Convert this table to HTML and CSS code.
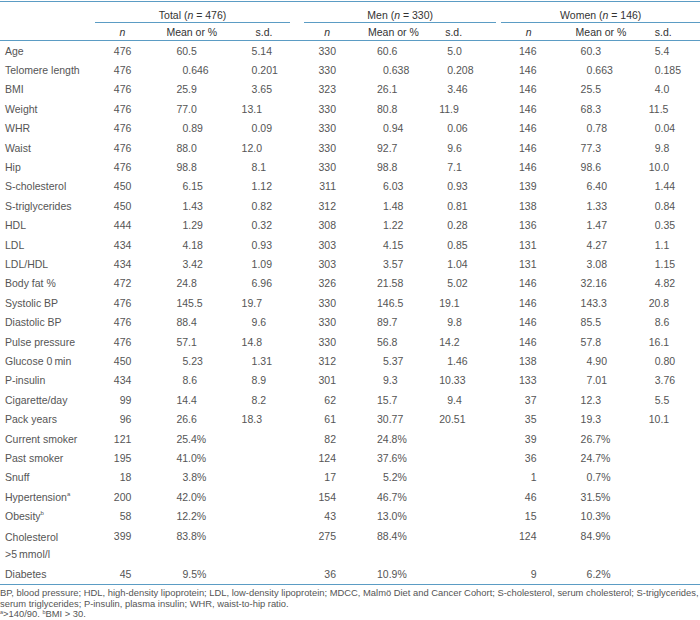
FILE: index.html
```html
<!DOCTYPE html>
<html>
<head>
<meta charset="utf-8">
<link rel="stylesheet" href="styles.css">
</head>
<body>
<div class="page">
<table class="tbl">
<colgroup>
<col class="c-lab"><col class="c-n"><col class="c-m"><col class="c-s">
<col class="c-n"><col class="c-m"><col class="c-s">
<col class="c-n"><col class="c-m"><col class="c-s">
</colgroup>
<thead>
<tr class="grp">
<th></th>
<th colspan="3"><div class="gl gl-t">Total (<i>n</i> = 476)</div></th>
<th colspan="3"><div class="gl gl-m">Men (<i>n</i> = 330)</div></th>
<th colspan="3"><div class="gl gl-w">Women (<i>n</i> = 146)</div></th>
</tr>
<tr class="sub">
<th></th>
<th class="hn t"><i>n</i></th><th class="hm t">Mean or %</th><th class="hs t">s.d.</th>
<th class="hn m"><i>n</i></th><th class="hm m">Mean or %</th><th class="hs m">s.d.</th>
<th class="hn w"><i>n</i></th><th class="hm w">Mean or %</th><th class="hs w">s.d.</th>
</tr>
</thead>
<tbody>
<tr><td>Age</td><td class="n t">476</td><td class="v t">60.5</td><td class="s t p1">5.14</td><td class="n m">330</td><td class="v m">60.6</td><td class="s m p1">5.0</td><td class="n w">146</td><td class="v w">60.3</td><td class="s w p1">5.4</td></tr>
<tr><td>Telomere length</td><td class="n t">476</td><td class="v t p1">0.646</td><td class="s t p1">0.201</td><td class="n m">330</td><td class="v m p1">0.638</td><td class="s m p1">0.208</td><td class="n w">146</td><td class="v w p1">0.663</td><td class="s w p1">0.185</td></tr>
<tr><td>BMI</td><td class="n t">476</td><td class="v t">25.9</td><td class="s t p1">3.65</td><td class="n m">323</td><td class="v m">26.1</td><td class="s m p1">3.46</td><td class="n w">146</td><td class="v w">25.5</td><td class="s w p1">4.0</td></tr>
<tr><td>Weight</td><td class="n t">476</td><td class="v t">77.0</td><td class="s t">13.1</td><td class="n m">330</td><td class="v m">80.8</td><td class="s m">11.9</td><td class="n w">146</td><td class="v w">68.3</td><td class="s w">11.5</td></tr>
<tr><td>WHR</td><td class="n t">476</td><td class="v t p1">0.89</td><td class="s t p1">0.09</td><td class="n m">330</td><td class="v m p1">0.94</td><td class="s m p1">0.06</td><td class="n w">146</td><td class="v w p1">0.78</td><td class="s w p1">0.04</td></tr>
<tr><td>Waist</td><td class="n t">476</td><td class="v t">88.0</td><td class="s t">12.0</td><td class="n m">330</td><td class="v m">92.7</td><td class="s m p1">9.6</td><td class="n w">146</td><td class="v w">77.3</td><td class="s w p1">9.8</td></tr>
<tr><td>Hip</td><td class="n t">476</td><td class="v t">98.8</td><td class="s t p1">8.1</td><td class="n m">330</td><td class="v m">98.8</td><td class="s m p1">7.1</td><td class="n w">146</td><td class="v w">98.6</td><td class="s w">10.0</td></tr>
<tr><td>S-cholesterol</td><td class="n t">450</td><td class="v t p1">6.15</td><td class="s t p1">1.12</td><td class="n m">311</td><td class="v m p1">6.03</td><td class="s m p1">0.93</td><td class="n w">139</td><td class="v w p1">6.40</td><td class="s w p1">1.44</td></tr>
<tr><td>S-triglycerides</td><td class="n t">450</td><td class="v t p1">1.43</td><td class="s t p1">0.82</td><td class="n m">312</td><td class="v m p1">1.48</td><td class="s m p1">0.81</td><td class="n w">138</td><td class="v w p1">1.33</td><td class="s w p1">0.84</td></tr>
<tr><td>HDL</td><td class="n t">444</td><td class="v t p1">1.29</td><td class="s t p1">0.32</td><td class="n m">308</td><td class="v m p1">1.22</td><td class="s m p1">0.28</td><td class="n w">136</td><td class="v w p1">1.47</td><td class="s w p1">0.35</td></tr>
<tr><td>LDL</td><td class="n t">434</td><td class="v t p1">4.18</td><td class="s t p1">0.93</td><td class="n m">303</td><td class="v m p1">4.15</td><td class="s m p1">0.85</td><td class="n w">131</td><td class="v w p1">4.27</td><td class="s w p1">1.1</td></tr>
<tr><td>LDL/HDL</td><td class="n t">434</td><td class="v t p1">3.42</td><td class="s t p1">1.09</td><td class="n m">303</td><td class="v m p1">3.57</td><td class="s m p1">1.04</td><td class="n w">131</td><td class="v w p1">3.08</td><td class="s w p1">1.15</td></tr>
<tr><td>Body fat %</td><td class="n t">472</td><td class="v t">24.8</td><td class="s t p1">6.96</td><td class="n m">326</td><td class="v m">21.58</td><td class="s m p1">5.02</td><td class="n w">146</td><td class="v w">32.16</td><td class="s w p1">4.82</td></tr>
<tr><td>Systolic BP</td><td class="n t">476</td><td class="v t">145.5</td><td class="s t">19.7</td><td class="n m">330</td><td class="v m">146.5</td><td class="s m">19.1</td><td class="n w">146</td><td class="v w">143.3</td><td class="s w">20.8</td></tr>
<tr><td>Diastolic BP</td><td class="n t">476</td><td class="v t">88.4</td><td class="s t p1">9.6</td><td class="n m">330</td><td class="v m">89.7</td><td class="s m p1">9.8</td><td class="n w">146</td><td class="v w">85.5</td><td class="s w p1">8.6</td></tr>
<tr><td>Pulse pressure</td><td class="n t">476</td><td class="v t">57.1</td><td class="s t">14.8</td><td class="n m">330</td><td class="v m">56.8</td><td class="s m">14.2</td><td class="n w">146</td><td class="v w">57.8</td><td class="s w">16.1</td></tr>
<tr><td>Glucose 0&#8201;min</td><td class="n t">450</td><td class="v t p1">5.23</td><td class="s t p1">1.31</td><td class="n m">312</td><td class="v m p1">5.37</td><td class="s m p1">1.46</td><td class="n w">138</td><td class="v w p1">4.90</td><td class="s w p1">0.80</td></tr>
<tr><td>P-insulin</td><td class="n t">434</td><td class="v t p1">8.6</td><td class="s t p1">8.9</td><td class="n m">301</td><td class="v m p1">9.3</td><td class="s m">10.33</td><td class="n w">133</td><td class="v w p1">7.01</td><td class="s w p1">3.76</td></tr>
<tr><td>Cigarette/day</td><td class="n t">99</td><td class="v t">14.4</td><td class="s t p1">8.2</td><td class="n m">62</td><td class="v m">15.7</td><td class="s m p1">9.4</td><td class="n w">37</td><td class="v w">12.3</td><td class="s w p1">5.5</td></tr>
<tr><td>Pack years</td><td class="n t">96</td><td class="v t">26.6</td><td class="s t">18.3</td><td class="n m">61</td><td class="v m">30.77</td><td class="s m">20.51</td><td class="n w">35</td><td class="v w">19.3</td><td class="s w">10.1</td></tr>
<tr><td>Current smoker</td><td class="n t">121</td><td class="v t">25.4%</td><td class="s t"></td><td class="n m">82</td><td class="v m">24.8%</td><td class="s m"></td><td class="n w">39</td><td class="v w">26.7%</td><td class="s w"></td></tr>
<tr><td>Past smoker</td><td class="n t">195</td><td class="v t">41.0%</td><td class="s t"></td><td class="n m">124</td><td class="v m">37.6%</td><td class="s m"></td><td class="n w">36</td><td class="v w">24.7%</td><td class="s w"></td></tr>
<tr><td>Snuff</td><td class="n t">18</td><td class="v t p1">3.8%</td><td class="s t"></td><td class="n m">17</td><td class="v m p1">5.2%</td><td class="s m"></td><td class="n w">1</td><td class="v w p1">0.7%</td><td class="s w"></td></tr>
<tr><td>Hypertension<sup>a</sup></td><td class="n t">200</td><td class="v t">42.0%</td><td class="s t"></td><td class="n m">154</td><td class="v m">46.7%</td><td class="s m"></td><td class="n w">46</td><td class="v w">31.5%</td><td class="s w"></td></tr>
<tr><td>Obesity<sup>b</sup></td><td class="n t">58</td><td class="v t">12.2%</td><td class="s t"></td><td class="n m">43</td><td class="v m">13.0%</td><td class="s m"></td><td class="n w">15</td><td class="v w">10.3%</td><td class="s w"></td></tr>
<tr class="dbl"><td>Cholesterol<br>&gt;5&#8201;mmol/l</td><td class="n t">399</td><td class="v t">83.8%</td><td class="s t"></td><td class="n m">275</td><td class="v m">88.4%</td><td class="s m"></td><td class="n w">124</td><td class="v w">84.9%</td><td class="s w"></td></tr>
<tr class="last"><td>Diabetes</td><td class="n t">45</td><td class="v t p1">9.5%</td><td class="s t"></td><td class="n m">36</td><td class="v m">10.9%</td><td class="s m"></td><td class="n w">9</td><td class="v w p1">6.2%</td><td class="s w"></td></tr>
</tbody>
</table>
<div class="notes">
<p>BP, blood pressure; HDL, high-density lipoprotein; LDL, low-density lipoprotein; MDCC, Malmö Diet and Cancer Cohort; S-cholesterol, serum cholesterol; S-triglycerides,<br>serum triglycerides; P-insulin, plasma insulin; WHR, waist-to-hip ratio.</p>
<p><sup>a</sup>&gt;140/90. <sup>b</sup>BMI &gt; 30.</p>
</div>
</div>
</body>
</html>
```

FILE: styles.css
```css
html, body {
  margin: 0;
  padding: 0;
  background: #ffffff;
}
.page {
  width: 700px;
  padding-top: 1px;
  font-family: "Liberation Sans", Arial, sans-serif;
  color: #555555;
}
.tbl {
  width: 700px;
  border-collapse: collapse;
  table-layout: fixed;
  font-size: 10.5px;
  border-top: 1.5px solid #5b9cc4;
  border-bottom: 1.5px solid #5b9cc4;
}
.c-lab { width: 95px; }
.tbl col.c-n { width: 45px; }
.tbl col.c-m { width: 78px; }
.tbl col.c-s { width: 78px; }
.tbl th {
  font-weight: normal;
  color: #333333;
  padding: 0;
  text-align: left;
  white-space: nowrap;
}
.grp th {
  height: 21px;
  vertical-align: bottom;
}
.gl {
  border-bottom: 1.5px solid #5b9cc4;
  text-align: center;
  padding-bottom: 1px;
  line-height: 12px;
}
.gl-t { margin-right: 7px; }
.gl-m { margin-left: 7px; margin-right: 2px; }
.gl-w { margin-left: 3px; }
.sub th {
  height: 17px;
  border-bottom: 1.5px solid #5b9cc4;
  vertical-align: middle;
}
.tbl td {
  padding: 0;
  height: 19.4px;
  line-height: 14px;
  white-space: nowrap;
  vertical-align: middle;
}
.tbl td:first-child { padding-left: 5px; }
.tbl th.hn { text-align: right; }
.tbl th.hn.t { padding-right: 15px; }
.tbl th.hn.m { padding-right: 12px; }
.tbl th.hn.w { padding-right: 12px; }
.tbl th.hm.t { padding-left: 26px; }
.tbl th.hm.m { padding-left: 26px; }
.tbl th.hm.w { padding-left: 32px; }
.tbl th.hs.t { padding-left: 37px; }
.tbl th.hs.m { padding-left: 25px; }
.tbl th.hs.w { padding-left: 33px; }
.tbl td.n { text-align: right; }
.tbl td.n.t { padding-right: 9px; }
.tbl td.n.m { padding-right: 6px; }
.tbl td.n.w { padding-right: 7px; }
.tbl td.v.t { padding-left: 36px; }
.tbl td.v.m { padding-left: 35px; }
.tbl td.v.w { padding-left: 37px; }
.tbl td.s.t { padding-left: 23px; }
.tbl td.s.m { padding-left: 19px; }
.tbl td.s.w { padding-left: 27px; }
.tbl td.v.p1 { text-indent: 6px; }
.tbl td.s.t.p1 { text-indent: 10px; }
.tbl td.s.m.p1 { text-indent: 8px; }
.tbl td.s.w.p1 { text-indent: 6px; }
.dbl td { vertical-align: top; padding-top: 3px; height: auto; }
.dbl td:first-child { line-height: 17px; padding-bottom: 2px; }
sup {
  font-size: 6px;
  vertical-align: top;
  line-height: 8px;
}
.notes {
  font-size: 9.4px;
  line-height: 10.5px;
  padding: 3px 0 0 0;
}
.notes p { margin: 0; }
.notes sup { font-size: 5.5px; line-height: 6px; }
```
